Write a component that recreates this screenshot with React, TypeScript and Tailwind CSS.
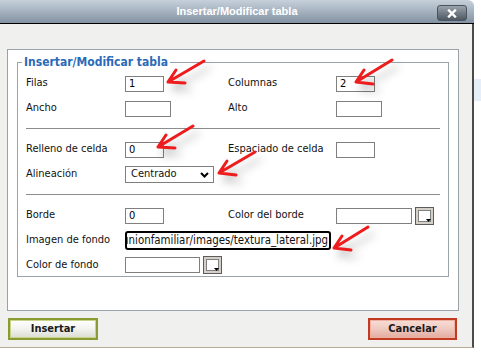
const font = "font-['DejaVu_Sans_Condensed','DejaVu_Sans',sans-serif]"

function Box({ w, value }: { w: string; value?: string }) {
  return (
    <div className={`${w} h-[16px] border border-[#7f7f7f] bg-white pl-[3px] text-[11px] leading-[14px] text-black`}>
      {value}
    </div>
  )
}

function Picker() {
  return (
    <div className="relative h-[18px] w-[19px] border border-[#5c5c5c] bg-[#d4d0c8] p-[2px]">
      <div className="h-full w-full border border-[#808080] bg-white" />
      <svg className="absolute bottom-[1px] right-[1px]" width="7" height="5" viewBox="0 0 7 5">
        <path d="M1 1h5L3.5 4z" fill="#000" />
      </svg>
    </div>
  )
}

function Row({ label, children, label2, children2 }: { label: string; children: React.ReactNode; label2?: string; children2?: React.ReactNode }) {
  return (
    <div className="flex h-[25px] items-center">
      <div className="w-[99px] shrink-0">{label}</div>
      <div className="w-[103px] shrink-0">{children}</div>
      {label2 && <div className="w-[108px] shrink-0">{label2}</div>}
      {children2}
    </div>
  )
}

function Arrow({ d }: { d: string }) {
  return <path d={d} fill="none" stroke="#ee1c1c" strokeWidth="3" strokeLinecap="round" strokeLinejoin="round" />
}

export default function App() {
  return (
    <div className={`relative flex h-[364px] w-[481px] overflow-hidden bg-white text-[11px] text-[#111] ${font}`}>
      <div className="flex h-[348px] w-[474px] shrink-0 flex-col">
        {/* title bar */}
        <div className="relative flex h-[24px] shrink-0 items-center justify-center rounded-tr-[6px] border-b border-black bg-gradient-to-b from-[#c6d0da] via-[#a5b2bf] to-[#8393a3]">
          <span className="font-['Liberation_Sans',Arial,sans-serif] text-[11px] font-bold text-white">Insertar/Modificar tabla</span>
          <div className="absolute right-[7px] top-[5px] flex h-[16px] w-[30px] items-center justify-center rounded-[3px] border border-[#4a545e] bg-gradient-to-b from-[#9aa3ac] to-[#4f5963]">
            <svg width="10" height="9" viewBox="0 0 10 9">
              <path d="M2 1.5l6 6M8 1.5l-6 6" stroke="#fff" strokeWidth="2.4" strokeLinecap="square" />
            </svg>
          </div>
        </div>

        {/* body */}
        <div className="flex flex-1 flex-col border-b border-r-2 border-b-[#b9aa98] border-r-[#4e4a46] bg-[#f0f0ee] pl-[7px] pt-[25px]">
          <div className="h-[262px] w-[452px] border border-[#9aa4a8] bg-white px-[9px] pt-[3px]">
            <fieldset className="h-[224px] border border-[#9aa4a8] px-[8px]">
              <legend className="ml-[-4px] px-[2px] text-[12px] font-bold text-[#2a6ab8]">Insertar/Modificar tabla</legend>
              <Row label="Filas" label2="Columnas" children2={<Box w="w-[39px]" value="2" />}>
                <Box w="w-[39px]" value="1" />
              </Row>
              <Row label="Ancho" label2="Alto" children2={<Box w="w-[46px]" />}>
                <Box w="w-[46px]" />
              </Row>
              <div className="mb-[8px] mt-[7px] h-px bg-[#8c8c8c]" />
              <Row label="Relleno de celda" label2="Espaciado de celda" children2={<Box w="w-[39px]" />}>
                <Box w="w-[39px]" value="0" />
              </Row>
              <Row label="Alineación">
                <div className="flex h-[17px] w-[89px] items-center justify-between border border-[#7f7f7f] bg-white pl-[5px] pr-[4px]">
                  <span>Centrado</span>
                  <svg width="9" height="6" viewBox="0 0 9 6">
                    <path d="M1 1l3.5 3.5L8 1" fill="none" stroke="#000" strokeWidth="2" />
                  </svg>
                </div>
              </Row>
              <div className="mb-[8px] mt-[7px] h-px bg-[#8c8c8c]" />
              <Row
                label="Borde"
                label2="Color del borde"
                children2={
                  <div className="flex items-center gap-[3px]">
                    <Box w="w-[76px]" />
                    <Picker />
                  </div>
                }
              >
                <Box w="w-[39px]" value="0" />
              </Row>
              <div className="flex h-[25px] items-center">
                <div className="w-[99px] shrink-0">Imagen de fondo</div>
                <div className="flex h-[19px] w-[206px] items-center justify-end overflow-hidden rounded-[3px] border-2 border-black bg-white pr-[1px]">
                  <span className="whitespace-nowrap text-[11.4px]">unionfamiliar/images/textura_lateral.jpg</span>
                </div>
              </div>
              <div className="flex h-[24px] items-center">
                <div className="w-[99px] shrink-0">Color de fondo</div>
                <div className="flex items-center gap-[3px]">
                  <Box w="w-[75px]" />
                  <Picker />
                </div>
              </div>
            </fieldset>
          </div>

          <div className="mt-[7px] flex w-[450px] justify-between pl-px">
            <button className="h-[22px] w-[90px] border-2 border-[#8b9b33] bg-gradient-to-b from-[#ffffff] via-[#f2f2ee] to-[#dcdcd4] text-[11px] font-bold text-[#1a1a1a] shadow-[inset_0_0_0_1px_#c8d48a]">
              Insertar
            </button>
            <button className="h-[22px] w-[89px] border-2 border-[#c23a22] bg-gradient-to-b from-[#f7ddd6] via-[#efc9c0] to-[#e3aaa0] text-[11px] font-bold text-[#1a1a1a] shadow-[inset_0_0_0_1px_#eeb0a0]">
              Cancelar
            </button>
          </div>
        </div>
      </div>

      {/* page behind the dialog */}
      <div className="mt-[79px] h-[22px] flex-1 bg-[#e6eef9]" />

      {/* red annotation arrows */}
      <svg className="pointer-events-none absolute left-0 top-0" width="481" height="364" viewBox="0 0 481 364" style={{ filter: 'drop-shadow(5px 7px 4px rgba(0,0,0,0.25))' }}>
        <Arrow d="M204 61 L168 82 M168 82 L185 83 M168 82 L176 70" />
        <Arrow d="M392 60 L356 82 M356 82 L373 84 M356 82 L364 70" />
        <Arrow d="M193 126 L158 147 M158 147 L175 148 M158 147 L166 135" />
        <Arrow d="M255 152 L219 173 M219 173 L236 175 M219 173 L227 161" />
        <Arrow d="M368 227 L334 248 M334 248 L351 250 M334 248 L342 236" />
      </svg>
    </div>
  )
}
